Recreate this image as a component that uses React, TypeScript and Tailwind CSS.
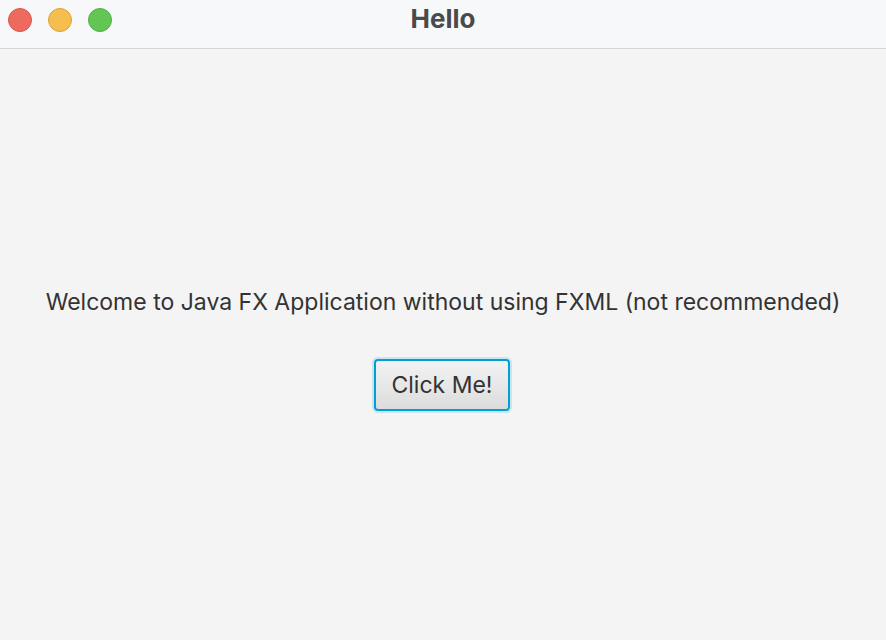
export default function App() {
  return (
    <div className="flex flex-col h-[640px] w-[886px] bg-[#f4f4f4] font-['Inter','Liberation_Sans',sans-serif] overflow-hidden">
      {/* Title bar */}
      <div className="relative h-[49px] shrink-0 bg-[#f7f8fa] border-b border-[#d5d5d5] flex items-center justify-center">
        <div className="absolute left-[8px] top-[8px] flex gap-[16px]">
          <span className="w-[24px] h-[24px] rounded-full bg-[#ee6a5f] border border-[#d9564b]" />
          <span className="w-[24px] h-[24px] rounded-full bg-[#f5be4f] border border-[#d9a33b]" />
          <span className="w-[24px] h-[24px] rounded-full bg-[#62c554] border border-[#4fae43]" />
        </div>
        <span className="text-[26px] leading-none font-bold text-[#4a4a4a] -mt-[11px]">Hello</span>
      </div>

      {/* Content */}
      <div className="flex-1 flex flex-col items-center justify-center gap-[40px] pt-[7px]">
        <p className="text-[23px] text-[#333333]">
          Welcome to Java FX Application without using FXML (not recommended)
        </p>
        <button className="h-[52px] px-[16px] -ml-[2px] rounded-[4px] border-2 border-[#039ed3] bg-gradient-to-b from-[#f3f3f3] to-[#dcdcdc] text-[23px] text-[#333333] shadow-[0_0_0_2px_rgba(3,158,211,0.18)]">
          Click Me!
        </button>
      </div>
    </div>
  )
}
